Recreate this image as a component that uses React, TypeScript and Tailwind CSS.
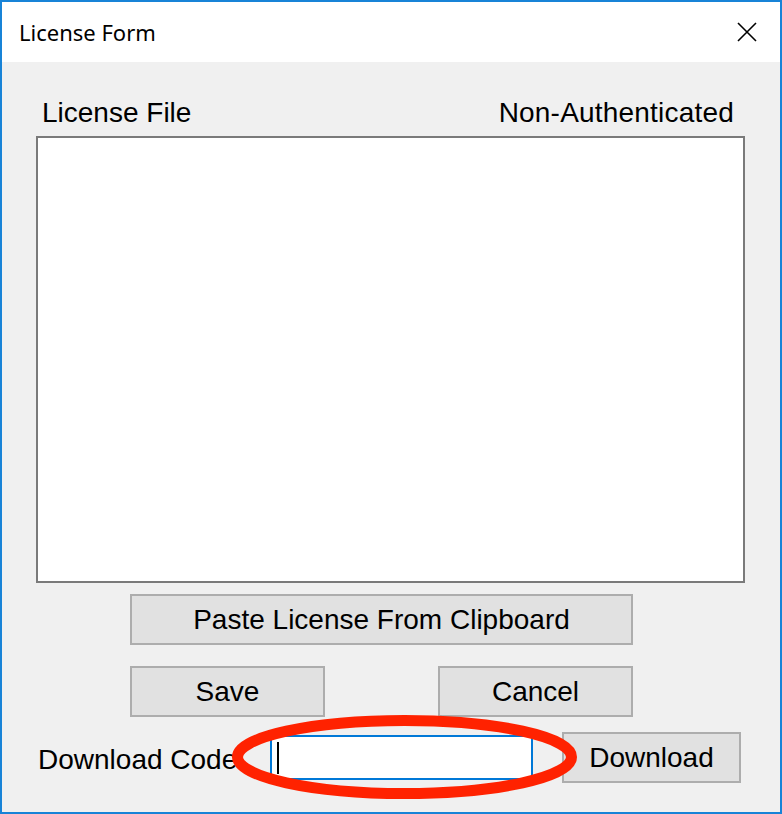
const btn =
  "flex items-center justify-center bg-[#e1e1e1] border-2 border-[#adadad] text-[28px] text-black font-['Liberation_Sans',Arial,sans-serif]";

export default function App() {
  return (
    <div className="relative w-[782px] h-[814px] border-2 border-[#1883d7] bg-[#f0f0f0] font-['Liberation_Sans',Arial,sans-serif] flex flex-col overflow-hidden">
      {/* Title bar */}
      <div className="h-[60px] bg-white flex items-center justify-between pl-[17px] pr-[23px]">
        <span className="text-[22px] text-black font-['Noto_Sans',sans-serif]">License Form</span>
        <svg width="20" height="20" viewBox="0 0 20 20" className="text-black">
          <path d="M1 1 L19 19 M19 1 L1 19" stroke="currentColor" strokeWidth="1.6" fill="none" />
        </svg>
      </div>

      {/* Body */}
      <div className="flex flex-col pl-[34px] pr-[35px]">
        <div className="flex justify-between items-center h-[32px] mt-[35px] pl-[6px] pr-[11px] text-[28px] leading-[32px] text-black">
          <span>License File</span>
          <span className="tracking-[0.2px]">Non-Authenticated</span>
        </div>

        <div className="mt-[7px] w-[709px] h-[447px] bg-white border-2 border-[#7a7a7a]" />

        <div className="mt-[11px] ml-[94px] w-[503px] h-[51px]">
          <button className={`${btn} w-full h-full`}>Paste License From Clipboard</button>
        </div>

        <div className="mt-[21px] ml-[94px] w-[503px] flex justify-between">
          <button className={`${btn} w-[195px] h-[51px]`}>Save</button>
          <button className={`${btn} w-[195px] h-[51px]`}>Cancel</button>
        </div>

        <div className="mt-[15px] flex items-center h-[51px]">
          <span className="ml-[2px] pt-[5px] w-[232px] text-[28px] text-black whitespace-nowrap">Download Code:</span>
          <div className="w-[263px] h-[45px] bg-white border-2 border-[#0078d7] flex items-center pl-[5px]">
            <div className="w-[2px] h-[32px] bg-black" />
          </div>
          <button className={`${btn} ml-[29px] w-[179px] h-[51px]`}>Download</button>
        </div>
      </div>

      {/* Red annotation ellipse */}
      <svg className="absolute left-0 top-0 pointer-events-none" width="782" height="814">
        <ellipse cx="402.5" cy="755" rx="167" ry="36.5" fill="none" stroke="#ff2200" strokeWidth="11" />
      </svg>
    </div>
  );
}
